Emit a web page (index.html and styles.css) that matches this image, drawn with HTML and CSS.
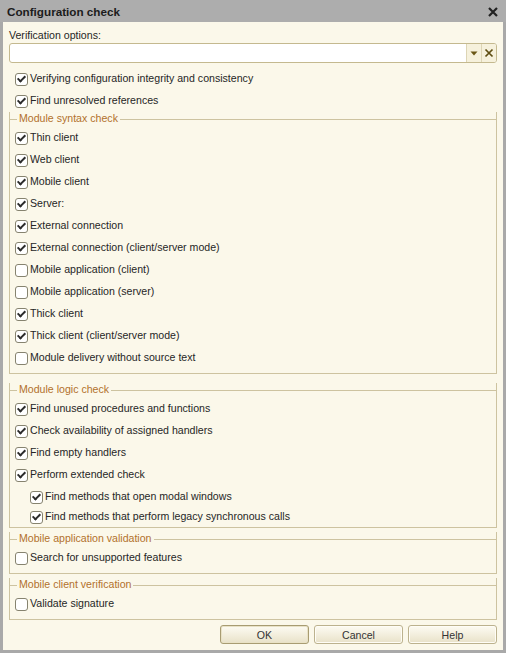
FILE: index.html
```html
<!DOCTYPE html>
<html>
<head>
<meta charset="utf-8">
<title>Configuration check</title>
<link rel="stylesheet" href="styles.css">
</head>
<body>
<div class="window">
  <div class="titlebar">
    <span class="title">Configuration check</span>
    <svg class="close" width="10" height="10" viewBox="0 0 10 10"><path d="M1 1 L9 9 M9 1 L1 9" stroke="#222" stroke-width="2.2" fill="none"/></svg>
  </div>
  <div class="content">
    <div class="label">Verification options:</div>
    <div class="combo">
      <div class="combo-field"></div>
      <div class="combo-btn"><svg width="8" height="5" viewBox="0 0 8 5"><path d="M0.5 0.5 H7.5 L4 4.5 Z" fill="#6a5716"/></svg></div>
      <div class="combo-btn combo-clear"><svg width="10" height="10" viewBox="0 0 10 10"><path d="M1.5 1.5 L8.5 8.5 M8.5 1.5 L1.5 8.5" stroke="#5e4d12" stroke-width="1.7" fill="none"/></svg></div>
    </div>
    <div class="rows top-rows">
      <div class="row"><span class="cb on"></span>Verifying configuration integrity and consistency</div>
      <div class="row"><span class="cb on"></span>Find unresolved references</div>
    </div>

    <div class="group g-syntax">
      <div class="legend"><span>Module syntax check</span></div>
      <div class="row"><span class="cb on"></span>Thin client</div>
      <div class="row"><span class="cb on"></span>Web client</div>
      <div class="row"><span class="cb on"></span>Mobile client</div>
      <div class="row"><span class="cb on"></span>Server:</div>
      <div class="row"><span class="cb on"></span>External connection</div>
      <div class="row"><span class="cb on"></span>External connection (client/server mode)</div>
      <div class="row"><span class="cb"></span>Mobile application (client)</div>
      <div class="row"><span class="cb"></span>Mobile application (server)</div>
      <div class="row"><span class="cb on"></span>Thick client</div>
      <div class="row"><span class="cb on"></span>Thick client (client/server mode)</div>
      <div class="row"><span class="cb"></span>Module delivery without source text</div>
    </div>

    <div class="group g-logic">
      <div class="legend"><span>Module logic check</span></div>
      <div class="row"><span class="cb on"></span>Find unused procedures and functions</div>
      <div class="row"><span class="cb on"></span>Check availability of assigned handlers</div>
      <div class="row"><span class="cb on"></span>Find empty handlers</div>
      <div class="row"><span class="cb on"></span>Perform extended check</div>
      <div class="nested">
        <div class="row row-sm"><span class="cb on"></span>Find methods that open modal windows</div>
        <div class="row row-sm"><span class="cb on"></span>Find methods that perform legacy synchronous calls</div>
      </div>
    </div>

    <div class="group g-small">
      <div class="legend"><span>Mobile application validation</span></div>
      <div class="row"><span class="cb"></span>Search for unsupported features</div>
    </div>

    <div class="group g-small">
      <div class="legend"><span>Mobile client verification</span></div>
      <div class="row"><span class="cb"></span>Validate signature</div>
    </div>

    <div class="buttons">
      <button class="btn btn-default">OK</button>
      <button class="btn">Cancel</button>
      <button class="btn">Help</button>
    </div>
  </div>
</div>
</body>
</html>
```

FILE: styles.css
```css
* { box-sizing: border-box; }

html, body {
  margin: 0;
  padding: 0;
}

body {
  font-family: "Liberation Sans", Arial, sans-serif;
  font-size: 10.6px;
  color: #262626;
  background: #a9a9a9;
}

.window {
  width: 506px;
  height: 653px;
  background: #a9a9a9;
  display: flex;
  flex-direction: column;
}

.titlebar {
  height: 22px;
  flex: none;
  display: flex;
  align-items: center;
  justify-content: space-between;
  padding: 0 8px 0 7px;
  background: #adadad;
}

.title {
  font-weight: bold;
  font-size: 11.7px;
  color: #1c1c1c;
  line-height: 14px;
  margin-top: 1px;
}

.close {
  display: block;
  margin-top: 2px;
}

.content {
  flex: 1;
  margin: 0 3px 3px;
  background: #fbf8ea;
  padding: 7px 6px 0;
  display: flex;
  flex-direction: column;
}

.label {
  line-height: 13px;
  height: 13px;
}

.combo {
  margin-top: 1px;
  height: 20px;
  display: flex;
  border: 1px solid #c4b98f;
  border-radius: 3px;
  background: #fff;
  overflow: hidden;
}

.combo-field {
  flex: 1;
}

.combo-btn {
  width: 15px;
  display: flex;
  align-items: center;
  justify-content: center;
  background: #f6f1dc;
  border-left: 1px solid #ddd5b5;
}

.combo-clear {
  width: 15px;
}

.top-rows {
  margin-top: 5px;
  padding-left: 6px;
}

.row {
  height: 22px;
  padding-bottom: 2px;
  display: flex;
  align-items: center;
  line-height: 13px;
  white-space: nowrap;
}

.row-sm {
  height: 20px;
}

.cb {
  width: 13px;
  height: 13px;
  flex: none;
  margin: 2px 2px 0 0;
  border: 1px solid #86836f;
  border-radius: 3px;
  background: #fff;
  display: flex;
  align-items: center;
  justify-content: center;
}

.cb.on::after {
  content: "";
  width: 3px;
  height: 6px;
  border: solid #2b2b2b;
  border-width: 0 2px 2px 0;
  transform: translate(0, -1px) rotate(45deg);
}

.group {
  border: 1px solid #cdc3a0;
  border-top: none;
  padding: 0 0 4px 5px;
}

.legend {
  height: 13px;
  margin: 0 -1px 2px -6px;
  display: flex;
  align-items: flex-start;
  color: #b2712c;
  line-height: 13px;
}

.legend::before,
.legend::after {
  content: "";
  height: 1px;
  margin-top: 7px;
  background: #cdc3a0;
}

.legend::before {
  width: 8px;
}

.legend::after {
  flex: 1;
}

.legend span {
  padding: 0 2px;
}

.g-syntax {
  margin-top: 0;
}

.g-logic {
  margin-top: 9px;
  padding-bottom: 0;
}

.nested {
  padding: 1px 0 0 15px;
}

.g-small {
  margin-top: 4px;
}

.buttons {
  margin-top: 5px;
  display: flex;
  justify-content: flex-end;
  gap: 5px;
}

.btn {
  width: 89px;
  height: 19px;
  padding: 0;
  font-family: "Liberation Sans", Arial, sans-serif;
  font-size: 10.6px;
  color: #333;
  border: 1px solid #bcb28e;
  border-radius: 3px;
  background: linear-gradient(#fdfbf3, #f1ecd9 60%, #e8e1c8);
  box-shadow: inset 0 0 0 1px #fffdf6;
}

.btn-default {
  border-color: #a89c72;
  box-shadow: inset 0 0 0 1px #e9e2c6;
}
```
